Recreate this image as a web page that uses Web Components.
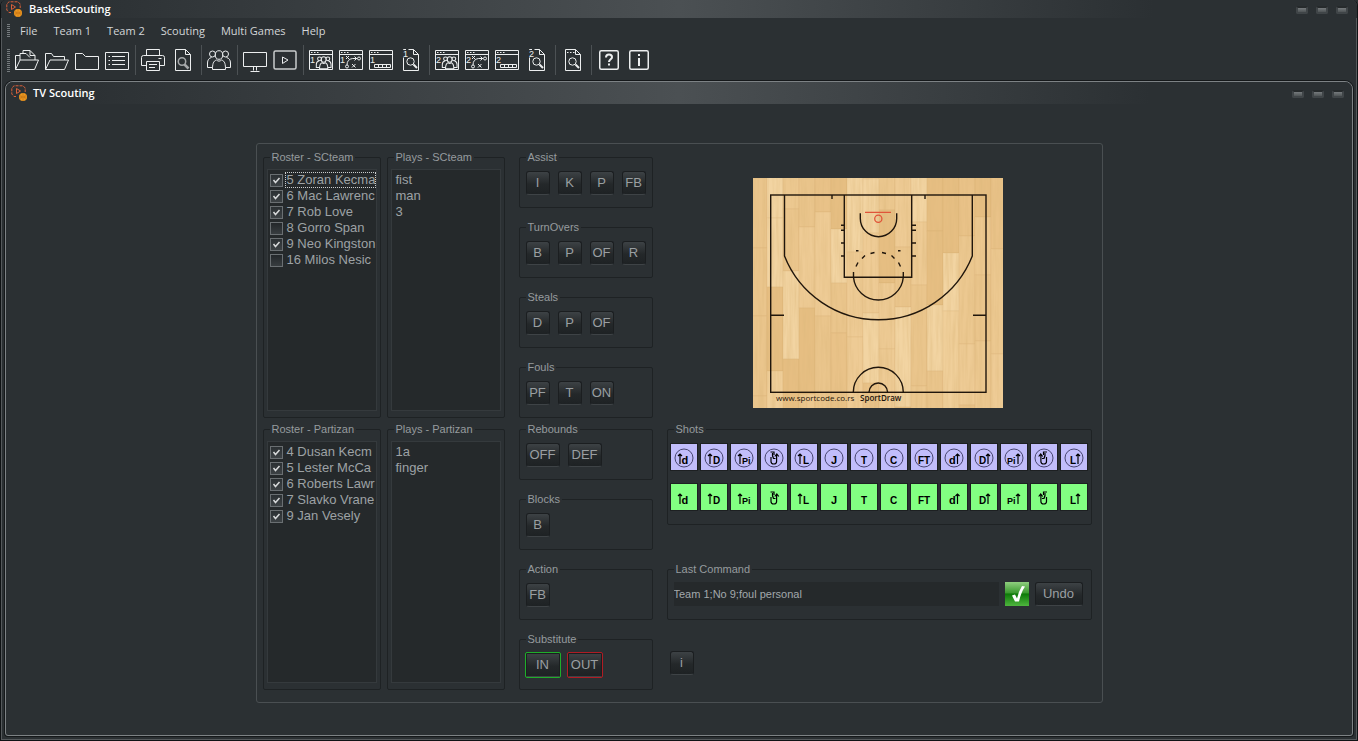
<!DOCTYPE html>
<html lang="en">
<head>
<meta charset="utf-8">
<title>BasketScouting</title>
<style>
  html, body { margin: 0; min-height: 100%; background: #2b3033; }
  body { font: 11px/13px "Liberation Sans", Arial, sans-serif; color: #969b9e; }
</style>
</head>
<body>
<app-shell></app-shell>

<script>
const define = (name, html, init) => {
  const t = document.createElement('template');
  t.innerHTML = '<style>*{box-sizing:border-box}[hidden]{display:none}</style>' + html;
  customElements.define(name, class extends HTMLElement {
    connectedCallback() {
      if (this.shadowRoot) return;
      const root = this.attachShadow({ mode: 'open' });
      root.append(t.content.cloneNode(true));
      if (init) init.call(this, root);
    }
  });
};

/* ---------- toolbar icons, 24 x 24 ---------- */
const PEOPLE = `
  <circle cx="5.5" cy="6" r="3"/><circle cx="18.5" cy="6" r="3"/>
  <path d="M6 19.500H.5V15c0-3 1.500-5 4-5.500M18 19.500h5.500V15c0-3-1.500-5-4-5.500"/>
  <ellipse cx="12" cy="7" rx="3.700" ry="4.300" fill="#2b3033"/>
  <path d="M5.500 21.500c0-5 .5-8.500 4-9.500 1.500 1.500 3.500 1.500 5 0 3.500 1 4 4.500 4 9.500z" fill="#2b3033"/>`;
const WIN = n => `<path d="M.5 2.500h23v19H.5zM.5 6.500h23"/><path d="M2 4.500h1.500M5 4.500h1.500M8 4.500h1.500"/>
  <text x="1" y="15">${n}</text>`;
const DOC = `<path d="M4.500 1.500h10l5 5v16h-15zM14.500 1.500v5h5"/>`;
const LENS = `<circle cx="11.500" cy="13.500" r="3.700"/><path d="M14.500 16.500l3.500 3.500" stroke-width="2"/>`;
const teamIcons = n => ({
  [`players${n}`]: WIN(n) + `<g transform="translate(7 7) scale(.64)" stroke-width="1.600">${PEOPLE}</g>`,
  [`tactics${n}`]: WIN(n) + `<path d="M7 8l3 3M10 8l-3 3M13 16l3.500 3.500M16.500 16l-3.500 3.500"/>
     <circle cx="20" cy="10.500" r="1.500"/><circle cx="8" cy="18.500" r="1.500"/><path d="M8 17c0-4 2-6 5.500-6.500H18M15.500 8.500l2 2-2 2"/>`,
  [`panel${n}`]: WIN(n) + `<path d="M5.500 16.500h16v3h-16zM9.500 16.500v3M13.500 16.500v3M17.500 16.500v3"/>`,
  [`report${n}`]: `<path d="M9.500 1.500h5l5 5v16h-15V9.500M14.500 1.500v5h5"/><path d="M4.500 2V1.500H7"/><text x="4" y="9">${n}</text>` + LENS
});
const ICONS = {
  openDocs: `<path d="M.5 21.500V7.500H5M5 12V5.500h3v-3h7l5 5V12M15 2.500v5h5M8 5.500h3l4 4"/><path d="M.5 21.500L5 12h18.500l-4 9.500z"/>`,
  openFolder: `<path d="M.5 21.500V5.500h6l2 3h11V12"/><path d="M.5 21.500L5 12h18.500l-4 9.500z"/>`,
  folder: `<path d="M.5 21.500V5.500h7l3 3h13v13z"/>`,
  list: `<path d="M.5 4.500h23v17H.5z"/><path d="M3.500 8.500H5M3.500 12.500H5M3.500 16.500H5M7 8.500h13M7 12.500h13M7 16.500h13"/>`,
  print: `<path d="M5.500 7.500v-6h13v6"/><path d="M5.500 17.500h-5v-8q0-2 2-2h19q2 0 2 2v8h-5M17.500 10.500h3"/><path d="M5.500 13.500h13v9h-13zM8 16.500h8M8 19.500h6"/>`,
  preview: DOC + `<g stroke="#a5a8aa" stroke-width="1.500"><circle cx="11" cy="13.500" r="3.700"/><path d="M13.500 16.500l4 4" stroke-width="2.500"/></g>`,
  people: PEOPLE,
  monitor: `<path d="M.5 4.500h23v14H.5zM10.500 18.500v4M13.500 18.500v4M7.500 23.500h9"/>`,
  play: `<rect x="1" y="3" width="22" height="18" rx="1.500" stroke="#c9cccd" stroke-width="1.500"/><path d="M9.500 9l5.500 3-5.500 3.500z"/>`,
  ...teamIcons(1), ...teamIcons(2),
  report: DOC + `<path d="M6 4.500h1.500M9 4.500h1.500M12 4.500h1.500"/>` + LENS,
  help: `<rect x="2.750" y="2.750" width="18.500" height="18.500" rx="1.500" stroke-width="1.500"/><path d="M9 9.500c0-2 1.200-3 3-3s3 1 3 2.700c0 2-3 2.200-3 4.800M12 15.500v2" stroke-width="2"/>`,
  info: `<rect x="2.750" y="2.750" width="18.500" height="18.500" rx="1.500" stroke-width="1.500"/><path d="M12 10v8M12 6v2" stroke-width="2"/>`
};

define('tool-icon', `
  <style>
    :host { display: block; flex: none; }
    button { display: block; width: 30px; height: 24px; padding: 0 3px; border: 0; background: none; }
    svg { display: block; width: 24px; height: 24px; fill: none; stroke: #eceeef; }
    text { font: 9px "Liberation Sans", Arial, sans-serif; fill: #eceeef; stroke: none; }
  </style><button type="button"></button>`,
  function (root) {
    const b = root.querySelector('button');
    b.setAttribute('aria-label', this.getAttribute('label'));
    b.innerHTML = `<svg viewBox="0 0 24 24" aria-hidden="true">${ICONS[this.getAttribute('icon')]}</svg>`;
  });

define('bar-grip', `
  <style>:host { display: block; flex: none; width: 3px; height: var(--grip, 14px);
    background: repeating-linear-gradient(#767b7e 0 1px, transparent 1px 2px); }</style>`);

define('bar-divider', `
  <style>:host { display: block; flex: none; width: 1px; height: 30px; margin: 0 2px 0 3px; background: #4c5154; }</style>`);

define('title-bar', `
  <style>
    :host { display: flex; align-items: center; height: var(--bar, 18px); padding: 0 var(--end, 9px) 0 5px;
      background: linear-gradient(90deg, #2b3033 5%, #4b5053 50%, #2b3033 85%); }
    svg { width: 17px; height: 17px; margin-right: var(--icon-gap, 6px); flex: none; }
    h1 { flex: 1; margin: 0; font: 600 11px/16px "Open Sans", sans-serif; color: #fff; }
    .ctl { display: flex; gap: 8px; padding-top: 2px; }
    button { width: 12px; height: 8px; padding: 0; border: 2px solid #404548; border-top-color: #262a2c; border-radius: 2px;
      background: linear-gradient(#767a7d, #4f5456); }
  </style>
  <svg viewBox="0 0 17 17" aria-hidden="true">
    <path d="M5 11.500H3L.8 9V3L3 .8h9L14.200 3v4" fill="none" stroke="#d9603a" stroke-dasharray="3 1"/>
    <path d="M5.500 3.500v5l4-2.500z" fill="none" stroke="#d9603a"/>
    <circle cx="12" cy="12" r="4" fill="#f09a22"/>
    <path d="M8.500 12h7M12 8v8M9.500 9.500q2 2.500 0 5M14.500 9.500q-2 2.500 0 5" fill="none" stroke="#b96a10" stroke-width=".6"/>
  </svg>
  <h1><slot></slot></h1>
  <div class="ctl"><button type="button" aria-label="Minimize"></button><button type="button" aria-label="Maximize"></button><button type="button" aria-label="Close"></button></div>`);

define('menu-bar', `
  <style>
    :host { display: flex; align-items: center; height: 26px; padding-left: 6px; }
    nav { display: flex; padding-left: 2px; }
    button { padding: 0 8px; border: 0; background: none; color: #d3d6d8; font: 11px/16px "Open Sans", sans-serif; }
  </style>
  <bar-grip></bar-grip><nav></nav>`,
  function (root) {
    for (const name of this.getAttribute('items').split(',')) {
      const b = document.createElement('button');
      b.type = 'button';
      b.textContent = name;
      root.querySelector('nav').append(b);
    }
  });

define('tool-bar', `
  <style>
    :host { display: flex; align-items: center; height: 32px; padding-left: 6px; --grip: 23px; }
    bar-grip { margin-right: 2px; }
  </style>
  <bar-grip></bar-grip><slot></slot>`);

/* ---------- scouting form controls ---------- */
define('group-box', `
  <style>
    :host { display: block; }
    fieldset { height: 100%; min-width: 0; margin: 0; border: 1px solid #1e2224; border-radius: 2px; padding: var(--pad, 7px 6px 12px); }
    legend { margin-left: var(--indent, 0); padding: 0 2px; font-size: 11px; line-height: 13px; height: 13px; }
    .in { height: 100%; }
  </style>
  <fieldset><legend></legend><div class="in"><slot></slot></div></fieldset>`,
  function (root) { root.querySelector('legend').textContent = this.getAttribute('label'); });

define('push-key', `
  <style>
    :host { display: block; flex: none; }
    button { display: block; width: 24px; height: 24px; padding: 0; border: 1px solid #1b1e20; border-bottom-color: #3e4346; border-radius: 3px;
      background: linear-gradient(#3d4245, #24282a 55%, #1e2224); color: #9a9fa2; font: 13px/22px "Liberation Sans", Arial, sans-serif;
      white-space: nowrap; }
    :host([size=m]) button { width: 34px; }
    :host([size=l]) button { width: 48px; }
    :host([tone]) button { border-radius: 1px; }
    :host([tone=in]) button { outline: 1px solid #1fae2a; }
    :host([tone=out]) button { outline: 1px solid #b01c24; }
  </style><button type="button"><slot></slot></button>`);

define('key-row', `<style>:host { display: flex; gap: 8px; }</style><slot></slot>`);

define('list-pane', `
  <style>
    :host { display: block; height: 100%; padding: 2px 0 0 2px; overflow: hidden; background: #25292b; border: 1px solid #353a3d;
      font-size: 13px; line-height: 16px; color: #9da2a5; }
  </style><slot></slot>`);

define('check-row', `
  <style>
    :host { display: block; }
    label { display: flex; align-items: center; height: 16px; }
    input { appearance: none; flex: none; width: 13px; height: 13px; margin: 0 2px 0 0; border: 1px solid #6a6f72;
      background: linear-gradient(#23272a, #383d40); }
    input:checked { background: url("data:image/svg+xml,%3Csvg xmlns='http://www.w3.org/2000/svg' viewBox='0 0 11 11'%3E%3Cpath d='M2.500 5l2 2.500L8.500 3' fill='none' stroke='%23d8dadb' stroke-width='1.500'/%3E%3C/svg%3E"), linear-gradient(#2b3033, #3d4245); }
    span { flex: 1; padding-left: 2px; white-space: nowrap; }
    :host([current]) span { outline: 1px dotted #c9cccd; outline-offset: -1px; }
  </style>
  <label><input type="checkbox"><span><slot></slot></span></label>`,
  function (root) { root.querySelector('input').checked = !this.hasAttribute('off'); });

define('play-row', `<style>:host { display: block; padding-left: 2px; white-space: nowrap; }</style><slot></slot>`);

/* ---------- shot pad ---------- */
const UP = x => `<path d="M${x} 20V10M${x - 2} 12L${x} 10l2 2" fill="none" stroke="#000" stroke-width="1.200"/>`;
const HOOK = `<path d="M10 13v4.500q0 2.500 2.800 2.500t2.800-2.500V11M13.800 12.500l2-2.500 2 2.500M14.500 14.500h-2q-1.500-3-1-5.500M9.500 8h3.500v3" fill="none" stroke="#000" stroke-width="1.200"/>`;
const glyph = (s, x, size = 10) => `<text x="${x}" y="20" font-size="${size}">${s}</text>`;
const SHOTS = [
  ['Drive left', UP(9) + glyph('d', 10.5, 11)], ['Dunk left', UP(9) + glyph('D', 12)], ['Pivot left', UP(9) + glyph('Pi', 11, 9)],
  ['Hook left', HOOK], ['Layup left', UP(9) + glyph('L', 12)], ['Jump', glyph('J', 10, 11)], ['Tip', glyph('T', 10)],
  ['Catch', glyph('C', 9)], ['Free throw', glyph('FT', 7)], ['Drive right', glyph('d', 8, 11) + UP(16.5)],
  ['Dunk right', glyph('D', 8) + UP(17)], ['Pivot right', glyph('Pi', 6, 9) + UP(17)],
  ['Hook right', `<g transform="translate(25.500 0) scale(-1 1)">${HOOK}</g>`], ['Layup right', glyph('L', 9) + UP(17)]
];
define('shot-row', `
  <style>
    :host { display: flex; gap: 4px; }
    button { flex: none; width: 26px; height: 26px; padding: 0; border: 0; background: var(--tile); box-shadow: 0 0 0 1px #1d2022; }
    svg { display: block; width: 26px; height: 26px; }
    text { font-family: "Liberation Sans", Arial, sans-serif; font-weight: 700; fill: #000; }
  </style>`,
  function (root) {
    const miss = this.hasAttribute('ring');
    for (const [name, art] of SHOTS) {
      const b = document.createElement('button');
      b.type = 'button';
      b.setAttribute('aria-label', name + (miss ? ', missed' : ', made'));
      b.innerHTML = `<svg viewBox="0 0 26 26">${miss ? '<circle cx="13" cy="14" r="9" fill="none" stroke="#3a3860" stroke-width=".9"/>' : ''}${art}</svg>`;
      root.append(b);
    }
  });

/* ---------- half court on a plank floor ---------- */
define('half-court', `
  <style>
    :host { display: block; width: 250px; height: 230px; }
    svg { display: block; width: 100%; height: 100%; }
    .l { fill: none; stroke: #20160c; stroke-width: 1.400; }
    text { font-family: "Open Sans", sans-serif; font-size: 8px; fill: #1c140c; }
  </style>
  <svg viewBox="0 0 250 230" role="img" aria-label="Half court">
    <defs><filter id="grain" x="0" y="0" width="100%" height="100%">
      <feTurbulence type="fractalNoise" baseFrequency=".3 .02" numOctaves="3" seed="4"/>
      <feColorMatrix values="0 0 0 0 .72  0 0 0 0 .48  0 0 0 0 .2  .9 0 0 0 -.32"/>
    </filter></defs>
    <rect width="250" height="230" fill="#e9c892"/>
    <g id="planks"></g>
    <rect width="250" height="230" filter="url(#grain)"/>
    <g class="l">
      <rect x="17.700" y="17" width="215.300" height="197.300"/>
      <path d="M31.500 17V78A101 101 0 0 0 219.300 78V17"/>
      <path d="M91.300 17V99.300H158.700V17"/>
      <path d="M100.500 94V99.300A25 25 0 0 0 150.300 99.300V94"/>
      <path d="M103 88.500l2-4M109 80.500l3-3M117.500 75.500l4-1M129 74.500l4 1M138.500 77.500l3 3M145.500 84.500l2 4M103 72.700h2.500M145 72.700h2.500"/>
      <path d="M107.300 35.300V40.500A18.200 18.200 0 0 0 143.700 40.500V35.300"/>
      <path d="M88 47.300h3M88 52.300h3M88 65h3M88 78h3M159 47.300h4M159 52.300h4M159 65h4M159 78h4"/>
      <path d="M79 17v4M172 17v4M18 137.300h13M220 137.300h13"/>
      <path d="M100.300 214.300A25 25 0 0 1 150.300 214.300M116 214.300A9.300 9.300 0 0 1 134.600 214.300"/>
    </g>
    <g fill="none" stroke="#e0553a" stroke-width="1.300"><path d="M112 34.300h26"/><circle cx="125.300" cy="40.700" r="3.600"/></g>
    <text x="23" y="223">www.sportcode.co.rs</text>
    <text x="107" y="223" font-weight="600">SportDraw</text>
  </svg>`,
  function (root) {
    const tones = ['#f0cf9a', '#eac58c', '#eecb95', '#e6be82', '#ecc890', '#f2d4a2', '#e9c288'];
    let out = '', n = 3;
    for (let col = 0; col < 16; col++) {
      for (let y = -((col * 47) % 70); y < 230;) {
        n = (n * 73 + 41) % 997;
        const h = 50 + n % 60;
        out += `<rect x="${col * 16 - 2}" y="${y}" width="16" height="${h}" fill="${tones[n % 7]}" stroke="#c89a5c" stroke-opacity=".25" stroke-width=".5"/>`;
        y += h;
      }
    }
    root.getElementById('planks').innerHTML = out;
  });

define('last-command', `
  <style>
    :host { display: flex; align-items: center; gap: 6px; }
    input { flex: 1; min-width: 0; height: 24px; padding: 0; border: 0; background: #25292b; color: #a3a8ab; font: 11px "Liberation Sans", Arial, sans-serif; }
    .ok { flex: none; width: 24px; height: 24px; padding: 0; border: 0; background: linear-gradient(#8fce7f, #3c9a30 45%, #0d7a08 50%, #4fb53e); }
    svg { display: block; }
  </style>
  <input type="text" aria-label="Last command" value="Team 1;No 9;foul personal">
  <button class="ok" type="button" aria-label="Confirm"><svg width="24" height="24" viewBox="0 0 24 24"><path d="M7 13.500l3-1 2 4q1.500-7 5-12.500l3 .5q-4 6-6 15h-4z" fill="#fff"/></svg></button>
  <push-key size="l">Undo</push-key>`);

define('scout-panel', `
  <style>
    :host { display: grid; width: 100%; max-width: 847px; padding: 7px 10px 12px 6px; border: 1px solid #4a4f52; border-radius: 3px;
      grid-template-columns: 118px 118px 134px minmax(0, 1fr); gap: 5px 6px; }
    .list { --pad: 5px 3px 6px; --indent: 3px; }
    .stack { display: grid; gap: 13px; margin-left: 8px; width: 134px; }
    .side { margin-left: 16px; display: flex; flex-direction: column; align-items: stretch; }
    .court { align-items: center; padding: 27px 3px 0 0; }
    .shots { --pad: 8px 3px 14px; --indent: 3px; }
    .shots shot-row + shot-row { margin-top: 14px; }
    .last { --pad: 6px 8px 13px 6px; margin: 38px 0 31px; }
    .help { margin-left: 3px; }
  </style>
  <group-box class="list" label="Roster - SCteam"><list-pane>
    <check-row current>5 Zoran Kecma</check-row><check-row>6 Mac Lawrenc</check-row><check-row>7 Rob Love</check-row>
    <check-row off>8 Gorro Span</check-row><check-row>9 Neo Kingston</check-row><check-row off>16 Milos Nesic</check-row>
  </list-pane></group-box>
  <group-box class="list" label="Plays - SCteam"><list-pane>
    <play-row>fist</play-row><play-row>man</play-row><play-row>3</play-row>
  </list-pane></group-box>
  <div class="stack">
    <group-box label="Assist"><key-row><push-key>I</push-key><push-key>K</push-key><push-key>P</push-key><push-key>FB</push-key></key-row></group-box>
    <group-box label="TurnOvers"><key-row><push-key>B</push-key><push-key>P</push-key><push-key>OF</push-key><push-key>R</push-key></key-row></group-box>
    <group-box label="Steals"><key-row><push-key>D</push-key><push-key>P</push-key><push-key>OF</push-key></key-row></group-box>
    <group-box label="Fouls"><key-row><push-key>PF</push-key><push-key>T</push-key><push-key>ON</push-key></key-row></group-box>
  </div>
  <div class="side court"><half-court></half-court></div>

  <group-box class="list" label="Roster - Partizan"><list-pane>
    <check-row>4 Dusan Kecm</check-row><check-row>5 Lester McCa</check-row><check-row>6 Roberts Lawr</check-row>
    <check-row>7 Slavko Vrane</check-row><check-row>9 Jan Vesely</check-row>
  </list-pane></group-box>
  <group-box class="list" label="Plays - Partizan"><list-pane>
    <play-row>1a</play-row><play-row>finger</play-row>
  </list-pane></group-box>
  <div class="stack">
    <group-box label="Rebounds"><key-row><push-key size="m">OFF</push-key><push-key size="m">DEF</push-key></key-row></group-box>
    <group-box label="Blocks"><key-row><push-key>B</push-key></key-row></group-box>
    <group-box label="Action"><key-row><push-key>FB</push-key></key-row></group-box>
    <group-box label="Substitute"><key-row><push-key size="m" tone="in">IN</push-key><push-key size="m" tone="out">OUT</push-key></key-row></group-box>
  </div>
  <div class="side">
    <group-box class="shots" label="Shots"><shot-row ring style="--tile:#c1bdfb"></shot-row><shot-row style="--tile:#82ff82"></shot-row></group-box>
    <group-box class="last" label="Last Command"><last-command></last-command></group-box>
    <push-key class="help">i</push-key>
  </div>`);

define('app-shell', `
  <style>
    :host { display: flex; flex-direction: column; min-height: 100vh; border: solid #101315; border-width: 0 1px 1px; border-radius: 6px 6px 0 0;
      padding-bottom: 4px; background: #2b3033; box-shadow: inset 1px -1px #55595c, inset -1px 0 #55595c; overflow: hidden; }
    :host, * { box-sizing: border-box; }
    main { flex: 1; display: flex; flex-direction: column; margin: 5px 4px 0; border: 1px solid #7d8285; border-radius: 8px 8px 3px 3px;
      box-shadow: 0 0 0 1px #15181a; overflow: hidden; --bar: 22px; --end: 8px; --icon-gap: 5px; }
    .work { flex: 1; display: flex; justify-content: center; align-items: flex-start; padding: 39px 16px 32px; }
  </style>
  <title-bar>BasketScouting</title-bar>
  <menu-bar items="File,Team 1,Team 2,Scouting,Multi Games,Help"></menu-bar>
  <tool-bar>
    <tool-icon icon="openDocs" label="Open game"></tool-icon><tool-icon icon="openFolder" label="Open folder"></tool-icon>
    <tool-icon icon="folder" label="Folder"></tool-icon><tool-icon icon="list" label="List"></tool-icon><bar-divider></bar-divider>
    <tool-icon icon="print" label="Print"></tool-icon><tool-icon icon="preview" label="Preview"></tool-icon><bar-divider></bar-divider>
    <tool-icon icon="people" label="Teams"></tool-icon><bar-divider></bar-divider>
    <tool-icon icon="monitor" label="Monitor"></tool-icon><tool-icon icon="play" label="Video"></tool-icon><bar-divider></bar-divider>
    <tool-icon icon="players1" label="Team 1 players"></tool-icon><tool-icon icon="tactics1" label="Team 1 tactics"></tool-icon>
    <tool-icon icon="panel1" label="Team 1 panel"></tool-icon><tool-icon icon="report1" label="Team 1 report"></tool-icon><bar-divider></bar-divider>
    <tool-icon icon="players2" label="Team 2 players"></tool-icon><tool-icon icon="tactics2" label="Team 2 tactics"></tool-icon>
    <tool-icon icon="panel2" label="Team 2 panel"></tool-icon><tool-icon icon="report2" label="Team 2 report"></tool-icon><bar-divider></bar-divider>
    <tool-icon icon="report" label="Report"></tool-icon><bar-divider></bar-divider>
    <tool-icon icon="help" label="Help"></tool-icon><tool-icon icon="info" label="About"></tool-icon>
  </tool-bar>
  <main><title-bar>TV Scouting</title-bar><div class="work"><scout-panel></scout-panel></div></main>`);
</script>
</body>
</html>
